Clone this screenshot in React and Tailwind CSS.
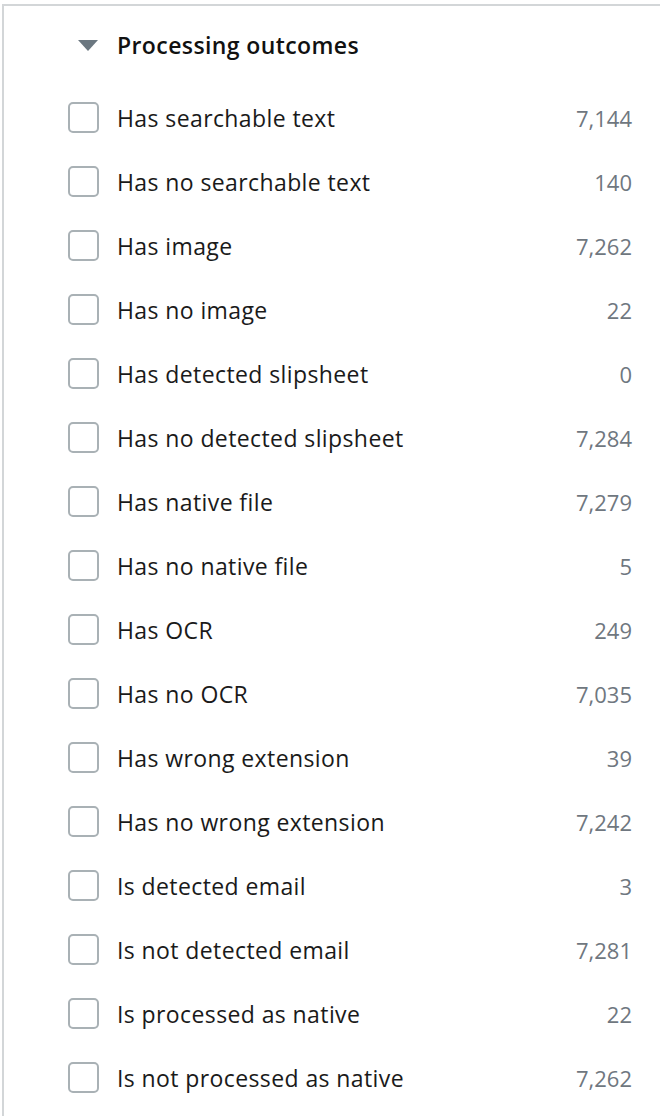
const outcomes = [
  { label: 'Has searchable text', count: '7,144' },
  { label: 'Has no searchable text', count: '140' },
  { label: 'Has image', count: '7,262' },
  { label: 'Has no image', count: '22' },
  { label: 'Has detected slipsheet', count: '0' },
  { label: 'Has no detected slipsheet', count: '7,284' },
  { label: 'Has native file', count: '7,279' },
  { label: 'Has no native file', count: '5' },
  { label: 'Has OCR', count: '249' },
  { label: 'Has no OCR', count: '7,035' },
  { label: 'Has wrong extension', count: '39' },
  { label: 'Has no wrong extension', count: '7,242' },
  { label: 'Is detected email', count: '3' },
  { label: 'Is not detected email', count: '7,281' },
  { label: 'Is processed as native', count: '22' },
  { label: 'Is not processed as native', count: '7,262' },
];

export default function App() {
  return (
    <div className="w-[660px] h-[1116px] bg-white pt-1 pl-[2px] font-['Open_Sans',sans-serif]">
      <div className="border-t-2 border-b-2 border-l-2 border-[#d3d6d8] pb-[13px]">
        <div className="flex items-center h-[80px] pl-[74px] pb-[1px]">
          <svg width="20" height="11" viewBox="0 0 20 11" className="mr-[19px]">
            <path d="M0 0h20L10 11z" fill="#6b7780" />
          </svg>
          <h2 className="text-[23px] font-semibold text-[#111] tracking-[0.4px]">Processing outcomes</h2>
        </div>
        <ul>
          {outcomes.map((item) => (
            <li key={item.label} className="flex items-baseline h-16 pl-[64px] pr-[28px] pt-[16px]">
              <span className="w-[31px] h-[31px] rounded-[5px] border-2 border-[#a9b1b5] shrink-0 self-start" />
              <span className="ml-[18px] flex-1 text-[23px] leading-[32px] text-[#1a1a1a] tracking-[0.4px]">{item.label}</span>
              <span className="text-[22px] leading-[32px] text-[#6f7780]">{item.count}</span>
            </li>
          ))}
        </ul>
      </div>
    </div>
  );
}
